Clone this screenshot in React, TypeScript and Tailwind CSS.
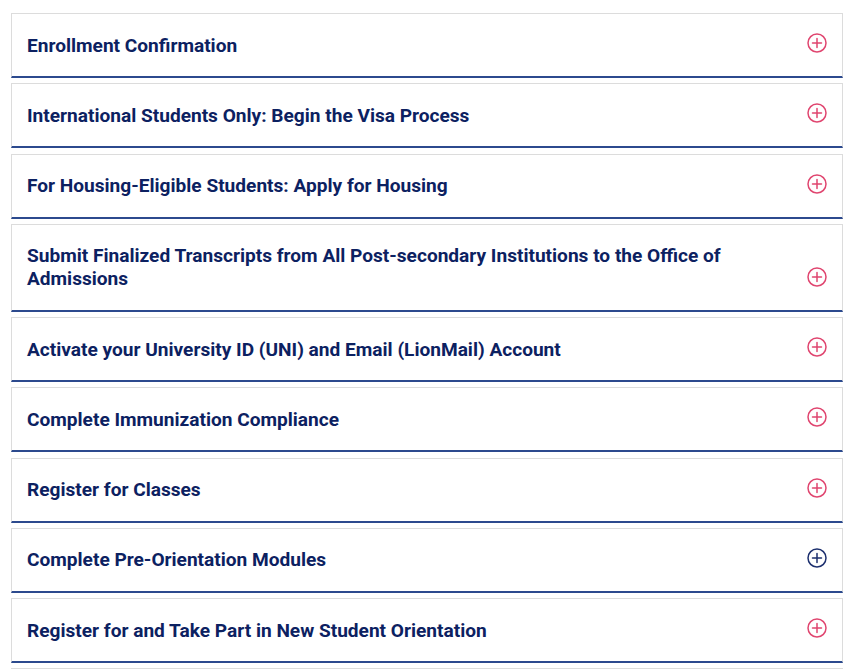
import React from "react";

const items: { title: string; dark?: boolean }[] = [
  { title: "Enrollment Confirmation" },
  { title: "International Students Only: Begin the Visa Process" },
  { title: "For Housing-Eligible Students: Apply for Housing" },
  {
    title:
      "Submit Finalized Transcripts from All Post-secondary Institutions to the Office of Admissions",
  },
  { title: "Activate your University ID (UNI) and Email (LionMail) Account" },
  { title: "Complete Immunization Compliance" },
  { title: "Register for Classes" },
  { title: "Complete Pre-Orientation Modules", dark: true },
  { title: "Register for and Take Part in New Student Orientation" },
];

function PlusCircle({ color }: { color: string }) {
  return (
    <svg width="20" height="20" viewBox="0 0 20 20" fill="none" stroke={color} strokeWidth="1.5" strokeLinecap="round">
      <circle cx="10" cy="10" r="9" />
      <path d="M10 5.5v9M5.5 10h9" />
    </svg>
  );
}

export default function App() {
  return (
    <div
      className="w-[865px] h-[669px] overflow-hidden bg-white pt-[13px] pl-[11px]"
      style={{ fontFamily: "Roboto, 'Liberation Sans', sans-serif" }}
    >
      <div className="w-[832px] flex flex-col gap-[5.25px]">
        {items.map((it, i) => (
          <div
            key={i}
            className="border border-[#dcdcdc] border-b-2 border-b-[#2c4a8e] bg-white pl-[15px] pr-[15px] pt-[19.5px] pb-[19.5px] flex items-end justify-between"
          >
            <div className="text-[#0c2161] font-bold text-[19.1px] leading-[23px] max-w-[730px]">
              {it.title}
            </div>
            <div className="h-[23px] flex items-center -translate-y-[2px] shrink-0">
              <PlusCircle color={it.dark ? "#1c2f6e" : "#e0456f"} />
            </div>
          </div>
        ))}
        <div className="h-[65px] border border-[#dcdcdc] border-b-2 border-b-[#2c4a8e] bg-white" />
      </div>
    </div>
  );
}
